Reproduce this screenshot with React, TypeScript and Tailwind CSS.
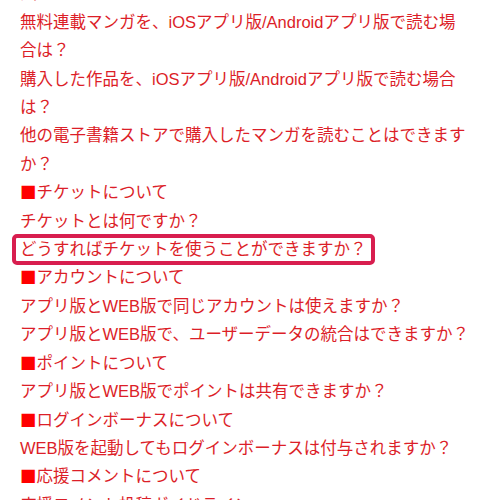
import React from 'react';

type Item = { lines: string[]; heading?: boolean; active?: boolean };

const items: Item[] = [
  { lines: ['法'] },
  { lines: ['無料連載マンガを、iOSアプリ版/Androidアプリ版で読む場', '合は？'] },
  { lines: ['購入した作品を、iOSアプリ版/Androidアプリ版で読む場合', 'は？'] },
  { lines: ['他の電子書籍ストアで購入したマンガを読むことはできます', 'か？'] },
  { lines: ['チケットについて'], heading: true },
  { lines: ['チケットとは何ですか？'] },
  { lines: ['どうすればチケットを使うことができますか？'], active: true },
  { lines: ['アカウントについて'], heading: true },
  { lines: ['アプリ版とWEB版で同じアカウントは使えますか？'] },
  { lines: ['アプリ版とWEB版で、ユーザーデータの統合はできますか？'] },
  { lines: ['ポイントについて'], heading: true },
  { lines: ['アプリ版とWEB版でポイントは共有できますか？'] },
  { lines: ['ログインボーナスについて'], heading: true },
  { lines: ['WEB版を起動してもログインボーナスは付与されますか？'] },
  { lines: ['応援コメントについて'], heading: true },
  { lines: ['応援コメント投稿ガイドライン'] },
];

export default function App() {
  return (
    <div
      className="h-[500px] w-[500px] overflow-hidden bg-white"
      style={{ fontFamily: '"Liberation Sans", "Noto Sans CJK JP", sans-serif' }}
    >
      <div className="-mt-[20.6px] pl-5 pr-3 text-[16.5px] leading-[28.4px] text-[#dc1e28]">
        {items.map((item, i) => {
          if (item.active) {
            return (
              <div
                key={i}
                className="-mx-2 my-[-1.3px] w-fit whitespace-nowrap rounded-[5px] border-4 border-[#d81e4f] px-1 leading-[23px]"
              >
                {item.lines[0]}
              </div>
            );
          }
          return (
            <div key={i} className="h-auto whitespace-nowrap">
              {item.heading && (
                <span className="inline-block h-[28.4px] align-top font-['Noto_Sans_CJK_JP',sans-serif] text-[#ff0000]">
                  ■
                </span>
              )}
              {item.lines.map((l, j) => (
                <React.Fragment key={j}>
                  {j > 0 && <br />}
                  {l}
                </React.Fragment>
              ))}
            </div>
          );
        })}
      </div>
    </div>
  );
}
